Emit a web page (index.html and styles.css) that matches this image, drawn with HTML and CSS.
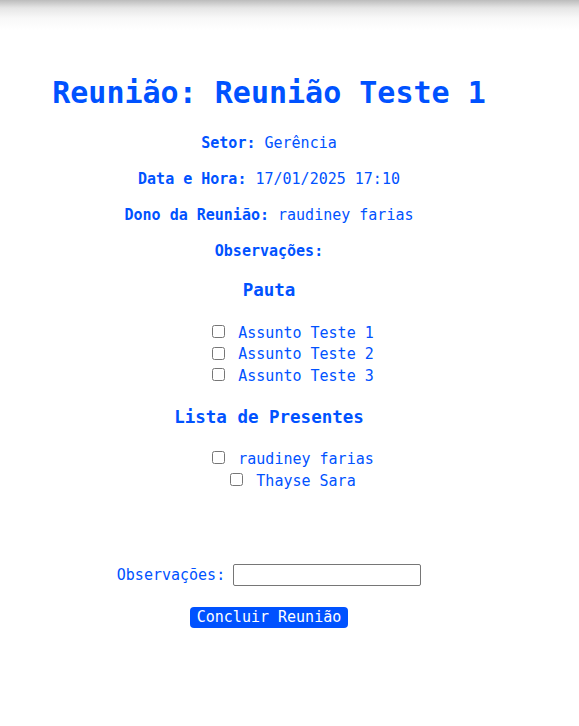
FILE: index.html
```html
<!DOCTYPE html>
<html lang="pt-BR">
<head>
<meta charset="utf-8">
<title>Reunião</title>
<link rel="stylesheet" href="styles.css">
</head>
<body>
<div class="shade"></div>
<main class="page">
  <h1 class="title">Reunião: Reunião Teste 1</h1>
  <p class="info"><b>Setor:</b> Gerência</p>
  <p class="info"><b>Data e Hora:</b> 17/01/2025 17:10</p>
  <p class="info"><b>Dono da Reunião:</b> raudiney farias</p>
  <p class="info"><b>Observações:</b></p>
  <h3 class="section">Pauta</h3>
  <ul class="checks">
    <li><label><input type="checkbox" class="box"><span>Assunto Teste 1</span></label></li>
    <li><label><input type="checkbox" class="box"><span>Assunto Teste 2</span></label></li>
    <li><label><input type="checkbox" class="box"><span>Assunto Teste 3</span></label></li>
  </ul>
  <h3 class="section">Lista de Presentes</h3>
  <ul class="checks people">
    <li><label><input type="checkbox" class="box"><span>raudiney farias</span></label></li>
    <li><label><input type="checkbox" class="box"><span>Thayse Sara</span></label></li>
  </ul>
  <form class="finish">
    <div class="row">
      <label class="obs-label" for="obs">Observações:</label>
      <input id="obs" type="text" class="obs-input">
    </div>
    <button type="button" class="btn">Concluir Reunião</button>
  </form>
</main>
</body>
</html>
```
FILE: styles.css
```css
html, body {
  margin: 0;
  padding: 0;
  background: #fff;
}
body {
  font-family: "DejaVu Sans Mono", "Liberation Mono", monospace;
  color: #0052ff;
}
.shade {
  height: 30px;
  background: linear-gradient(to bottom, #bcbcbc 0px, #e6e6e6 8px, #f8f8f8 18px, #ffffff 30px);
}
.page {
  width: 538px;
  text-align: center;
}
.title {
  margin: 45px 0 0;
  font-size: 30px;
  line-height: 36px;
  font-weight: bold;
}
.info {
  margin: 0;
  font-size: 15px;
  line-height: 20px;
}
.title + .info {
  margin-top: 22px;
}
.info + .info {
  margin-top: 16px;
}
.section {
  margin: 18px 0 0;
  font-size: 17.5px;
  line-height: 22px;
  font-weight: bold;
}
.checks + .section {
  margin-top: 19px;
}
.checks {
  list-style: none;
  margin: 21px 0 0;
  padding: 0 0 0 48px;
  font-size: 15px;
}
.checks.people {
  margin-top: 20px;
}
.checks li {
  display: flex;
  justify-content: center;
  align-items: center;
  height: 21.5px;
}
.people li {
  height: 22px;
}
.checks label {
  display: flex;
  align-items: center;
  gap: 13px;
  line-height: 18px;
}
.box {
  width: 13px;
  height: 13px;
  margin: 0;
  position: relative;
  top: -1px;
}
.finish {
  margin-top: 71px;
  display: flex;
  flex-direction: column;
  align-items: center;
}
.row {
  display: flex;
  align-items: center;
  gap: 8px;
  height: 24px;
  font-size: 15px;
}
.obs-input {
  box-sizing: border-box;
  width: 188px;
  height: 22px;
  border: 1px solid #767676;
  border-radius: 2px;
  padding: 1px 2px;
  font: inherit;
}
.btn {
  margin-top: 20px;
  box-sizing: border-box;
  width: 158px;
  height: 21px;
  padding: 0;
  border: none;
  border-radius: 4px;
  background: #0052ff;
  color: #fff;
  font-family: "DejaVu Sans Mono", "Liberation Mono", monospace;
  font-size: 15px;
  line-height: 21px;
}
```
